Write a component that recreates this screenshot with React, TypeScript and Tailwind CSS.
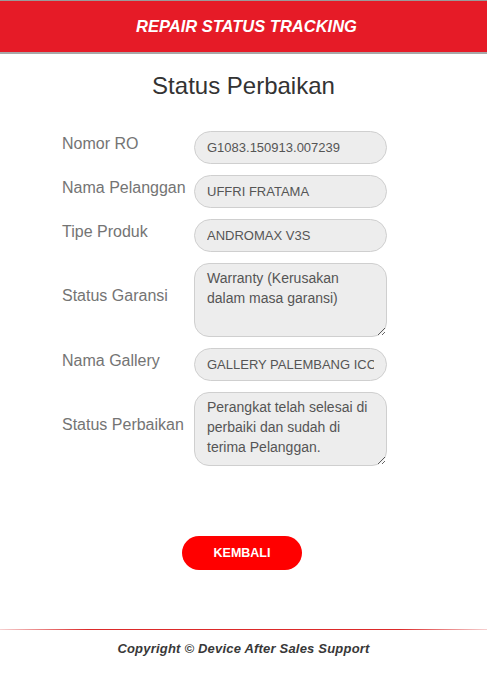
import React from "react";

const font = { fontFamily: '"Liberation Sans", Arial, sans-serif' };

function Row({ label, value, multi }: { label: string; value: string; multi?: boolean }) {
  return (
    <div className="flex items-center">
      <div className="w-[132px] shrink-0 pb-2 text-[16px] leading-5 text-[#747474]">{label}</div>
      {multi ? (
        <textarea
          readOnly
          value={value}
          className="block h-[74px] w-[193px] resize rounded-[15px] border border-[#cfcfcf] bg-[#ededed] px-[12px] py-[4px] text-[14px] leading-5 text-[#555] outline-none"
          style={font}
        />
      ) : (
        <input
          readOnly
          value={value}
          className="block h-[33px] w-[193px] rounded-full border border-[#cfcfcf] bg-[#ededed] px-[12px] text-[13px] text-[#555] outline-none"
          style={font}
        />
      )}
    </div>
  );
}

export default function App() {
  return (
    <div className="flex h-[678px] w-[487px] flex-col bg-white" style={font}>
      <div className="flex h-[54px] shrink-0 items-center justify-center border-t border-b-2 border-t-[#9a9a9a] border-b-[#a8a8a8] bg-[#e61b27]">
        <span className="pl-[6px] text-[16.5px] font-bold italic text-white">REPAIR STATUS TRACKING</span>
      </div>
      <h1 className="mt-[17px] text-center text-[24px] leading-[30px] text-[#333]">Status Perbaikan</h1>
      <div className="mt-[30px] flex flex-col gap-[11px] pl-[62px]">
        <Row label="Nomor RO" value="G1083.150913.007239" />
        <Row label="Nama Pelanggan" value="UFFRI FRATAMA" />
        <Row label="Tipe Produk" value="ANDROMAX V3S" />
        <Row label="Status Garansi" value="Warranty (Kerusakan dalam masa garansi)" multi />
        <Row label="Nama Gallery" value="GALLERY PALEMBANG ICC" />
        <Row label="Status Perbaikan" value="Perangkat telah selesai di perbaiki dan sudah di terima Pelanggan." multi />
      </div>
      <div className="mt-[70px] flex justify-center pr-[3px]">
        <button className="h-[34px] w-[120px] rounded-full bg-[#ff0000] text-[12.5px] font-bold text-white">KEMBALI</button>
      </div>
      <div className="mt-[59px] h-px w-full bg-[linear-gradient(to_right,#f6d0d0,#dc2a2a_18%,#dc2a2a_82%,#f6d0d0)]" />
      <div className="mt-[9px] text-center text-[13px] font-bold italic tracking-[0.2px] text-[#383838]">
        Copyright © Device After Sales Support
      </div>
    </div>
  );
}
